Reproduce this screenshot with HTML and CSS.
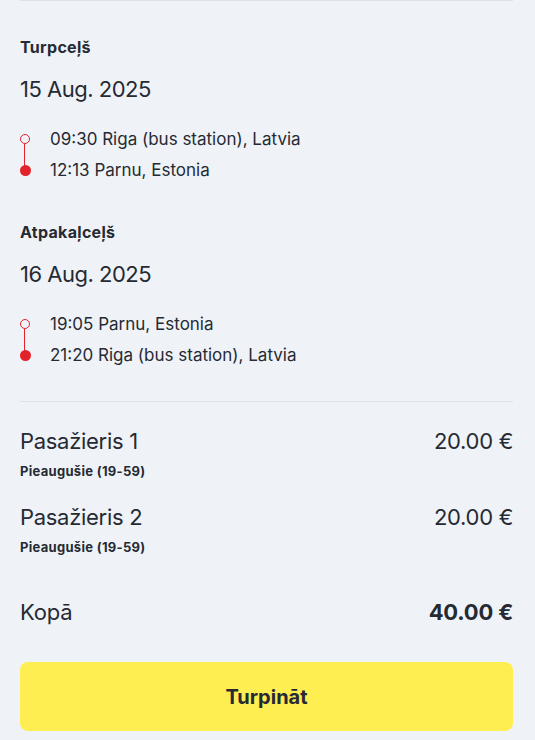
FILE: index.html
```html
<!DOCTYPE html>
<html lang="lv">
<head>
<meta charset="utf-8">
<link rel="stylesheet" href="styles.css">
</head>
<body>
<div class="page">
  <hr class="divider">
  <section class="leg leg-first">
    <h3 class="leg-title">Turpceļš</h3>
    <div class="leg-date">15 Aug. 2025</div>
    <div class="stops">
      <div class="stop"><span class="dot dot-open"></span><span>09:30 Riga (bus station), Latvia</span></div>
      <div class="stop"><span class="dot dot-full"></span><span>12:13 Parnu, Estonia</span></div>
    </div>
  </section>
  <section class="leg">
    <h3 class="leg-title">Atpakaļceļš</h3>
    <div class="leg-date">16 Aug. 2025</div>
    <div class="stops">
      <div class="stop"><span class="dot dot-open"></span><span>19:05 Parnu, Estonia</span></div>
      <div class="stop"><span class="dot dot-full"></span><span>21:20 Riga (bus station), Latvia</span></div>
    </div>
  </section>
  <hr class="divider divider-mid">
  <div class="passengers">
    <div class="pax">
      <div class="pax-row"><span>Pasažieris 1</span><span>20.00 €</span></div>
      <div class="pax-type">Pieaugušie (19-59)</div>
    </div>
    <div class="pax">
      <div class="pax-row"><span>Pasažieris 2</span><span>20.00 €</span></div>
      <div class="pax-type">Pieaugušie (19-59)</div>
    </div>
  </div>
  <div class="total"><span>Kopā</span><span class="total-sum">40.00 €</span></div>
  <button class="btn-continue" type="button">Turpināt</button>
</div>
</body>
</html>
```
FILE: styles.css
```css
html, body {
  margin: 0;
  padding: 0;
  background: #eff3f8;
}
body {
  font-family: Inter, "Noto Sans", "DejaVu Sans", sans-serif;
  color: #262a33;
}
.page {
  padding: 0 22px 0 20px;
}
.divider {
  margin: 0;
  border: 0;
  border-top: 1px solid #dfe3e9;
  height: 0;
}
.leg {
  margin-top: 40px;
}
.leg-first.leg {
  margin-top: 36px;
}
.leg-title {
  margin: 0;
  font-size: 16px;
  font-weight: 700;
  line-height: 20px;
  letter-spacing: 0.3px;
}
.leg-date {
  margin-top: 17px;
  font-size: 22px;
  line-height: 30px;
  font-weight: 400;
  letter-spacing: -0.5px;
}
.stops {
  margin-top: 23px;
  display: flex;
  flex-direction: column;
  gap: 7px;
}
.stop {
  display: flex;
  align-items: center;
  gap: 20px;
  font-size: 17px;
  line-height: 24px;
}
.dot {
  flex: none;
  width: 10px;
  height: 10px;
  border-radius: 50%;
  box-sizing: border-box;
  position: relative;
}
.dot-open {
  border: 1.5px solid #e3232b;
  background: transparent;
}
.dot-open::after {
  content: "";
  position: absolute;
  left: 2.75px;
  top: 8.5px;
  width: 1.5px;
  height: 25px;
  background: #e3232b;
}
.dot-full {
  width: 11px;
  height: 11px;
  margin-left: -0.5px;
  margin-right: -0.5px;
  background: #e3232b;
}
.divider-mid {
  margin-top: 34px;
}
.passengers {
  margin-top: 24px;
  display: flex;
  flex-direction: column;
  gap: 23px;
}
.pax-row {
  display: flex;
  justify-content: space-between;
  font-size: 22px;
  line-height: 30px;
  letter-spacing: -0.3px;
}
.pax-type {
  margin-top: 7px;
  font-size: 13px;
  line-height: 16px;
  font-weight: 700;
  letter-spacing: 0.3px;
}
.total {
  margin-top: 42px;
  display: flex;
  justify-content: space-between;
  font-size: 22px;
  line-height: 30px;
  letter-spacing: -0.2px;
}
.total-sum {
  font-weight: 700;
}
.btn-continue {
  display: block;
  width: 100%;
  margin-top: 35px;
  height: 69px;
  border: 0;
  border-radius: 8px;
  background: #ffee52;
  color: #262a33;
  font-family: inherit;
  font-size: 20px;
  font-weight: 700;
  cursor: pointer;
}
```
